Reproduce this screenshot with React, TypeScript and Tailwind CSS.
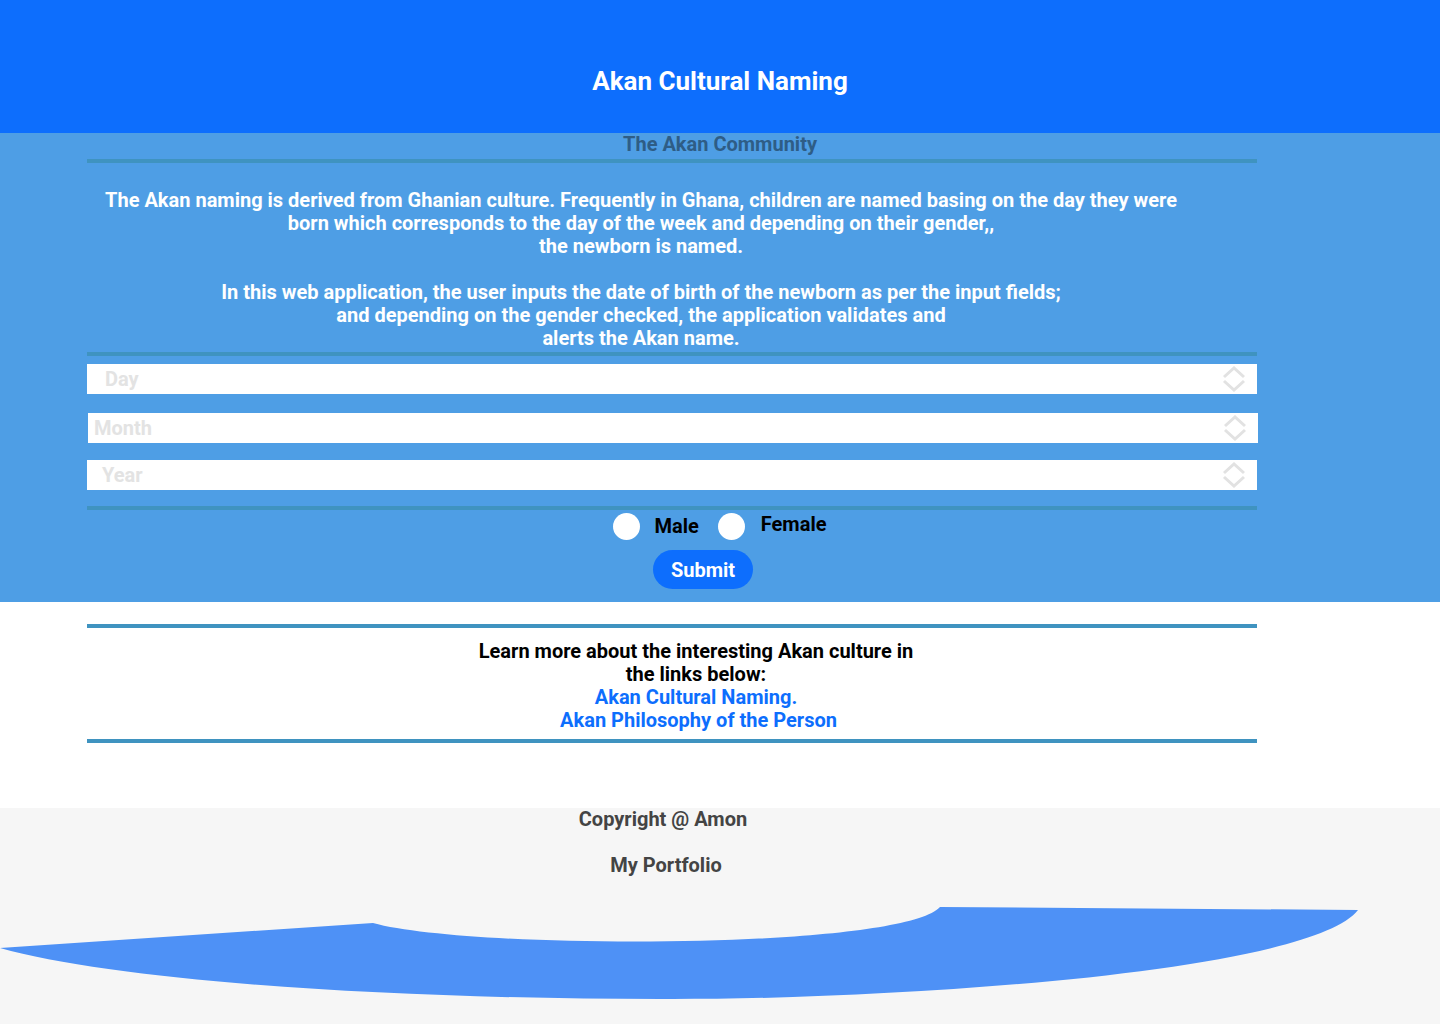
const font = { fontFamily: "Roboto, 'Liberation Sans', sans-serif" };

function Rule({ className = "" }: { className?: string }) {
  return <div className={`ml-[87px] h-[4px] w-[1170px] bg-[#3f93c0] ${className}`} />;
}

function NumberField({ placeholder, pad }: { placeholder: string; pad: string }) {
  return (
    <div className="ml-[87px] flex h-[30px] w-[1170px] items-center bg-white">
      <span className={`${pad} text-[20px] font-bold text-[#e3e3e3]`}>{placeholder}</span>
      <svg viewBox="0 0 26 26" className="ml-auto mr-[10px] h-[26px] w-[26px]" fill="none" stroke="#e2e2e2" strokeWidth="3" strokeLinejoin="miter">
        <polyline points="3,11 13,2 23,11" />
        <polyline points="3,15 13,24 23,15" />
      </svg>
    </div>
  );
}

export default function App() {
  return (
    <div className="min-h-[1024px] w-[1440px] bg-[#f6f6f6]" style={font}>
      {/* header */}
      <header className="h-[133px] bg-[#0d6efd] pt-[66px] text-center">
        <h1 className="text-[26px] font-bold leading-[30px] text-white">Akan Cultural Naming</h1>
      </header>

      {/* intro + form */}
      <section className="h-[469px] bg-[#4e9ee5]">
        <h2 className="text-center text-[20px] font-bold leading-[23px] text-[#2e5d86]">The Akan Community</h2>
        <Rule className="mt-[3px]" />
        <p className="ml-[88px] mt-[26px] w-[1106px] text-center text-[20px] font-bold leading-[23px] text-white">
          The Akan naming is derived from Ghanian culture. Frequently in Ghana, children are named basing on the day they were
          <br />
          born which corresponds to the day of the week and depending on their gender,,
          <br />
          the newborn is named.
          <br />
          <br />
          In this web application, the user inputs the date of birth of the newborn as per the input fields;
          <br />
          and depending on the gender checked, the application validates and
          <br />
          alerts the Akan name.
        </p>
        <Rule className="mt-[2px]" />
        <div className="mt-[8px]">
          <NumberField placeholder="Day" pad="pl-[18px]" />
        </div>
        <div className="ml-px mt-[19px]">
          <NumberField placeholder="Month" pad="pl-[6px]" />
        </div>
        <div className="mt-[17px]">
          <NumberField placeholder="Year" pad="pl-[15px]" />
        </div>
        <Rule className="mt-[16px]" />
        <div className="flex items-center justify-center">
          <span className="mt-[3px] h-[27px] w-[27px] rounded-full bg-white" />
          <span className="ml-[14px] mt-[2px] text-[20px] font-bold leading-[23px] text-black">Male</span>
          <span className="ml-[19px] mt-[3px] h-[27px] w-[27px] rounded-full bg-white" />
          <span className="ml-[16px] -mt-[2px] text-[20px] font-bold leading-[23px] text-black">Female</span>
        </div>
        <div className="mt-[10px] flex justify-center pr-[34px]">
          <button className="h-[39px] w-[100px] rounded-full bg-[#0d6efd] text-[20px] font-bold text-white">Submit</button>
        </div>
      </section>

      {/* links */}
      <section className="h-[206px] bg-white pt-[22px]">
        <Rule />
        <div className="ml-[87px] mt-[12px] w-[1170px] pl-[48px] text-center text-[20px] font-bold leading-[23px]">
          <p className="text-black">
            Learn more about the interesting Akan culture in
            <br />
            the links below:
          </p>
          <a href="#" className="block text-[#0d6efd]">Akan Cultural Naming.</a>
          <a href="#" className="block pl-[5px] text-[#0d6efd]">Akan Philosophy of the Person</a>
        </div>
        <Rule className="mt-[7px]" />
      </section>

      {/* footer */}
      <footer className="bg-[#f6f6f6] text-[20px] font-bold leading-[23px] text-[#444444]">
        <p className="pr-[114px] text-center">Copyright @ Amon</p>
        <p className="mt-[23px] pr-[108px] text-center">My Portfolio</p>
        <svg viewBox="0 0 1440 110" className="mt-[25px] block h-[110px] w-[1440px]">
          <path
            d="M0 46 L373 21 C470 48 900 48 940 5 L1358 8 C1310 70 900 98 660 97 C400 97 120 80 0 46 Z"
            fill="#4e91f6"
          />
        </svg>
      </footer>
    </div>
  );
}
